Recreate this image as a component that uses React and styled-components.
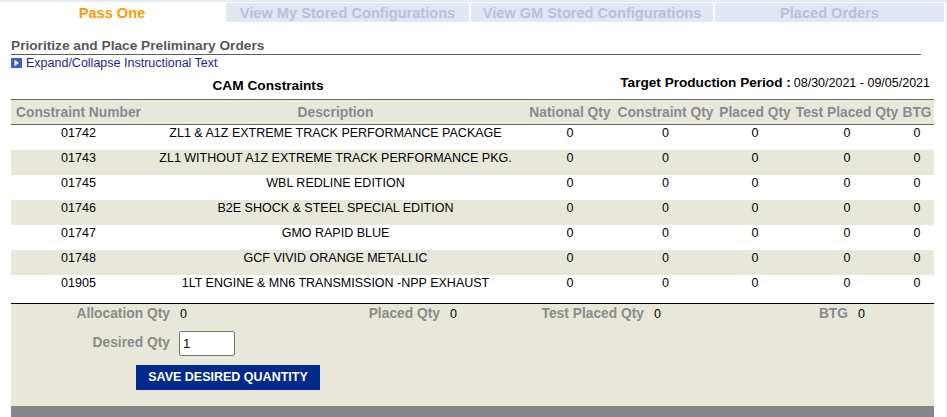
import styled, { createGlobalStyle } from 'styled-components';

const GlobalStyle = createGlobalStyle`
  html, body {
    margin: 0;
    padding: 0;
    background: #e5e9f5;
    font-family: "Liberation Sans", Arial, sans-serif;
  }
`;

const Page = styled.div`
  width: 946px;
  margin-top: 2px;
  background: #ffffff;
  min-height: 420px;
`;

const TabBar = styled.div`
  display: flex;
  gap: 2px;
  padding-top: 1px;
`;

const Tab = styled.div`
  width: ${(props) => props.$width}px;
  height: 19px;
  display: flex;
  align-items: center;
  justify-content: center;
  font-size: 14.6px;
  font-weight: 700;
  background: ${(props) => (props.$active ? '#ffffff' : '#e1e6f5')};
  color: ${(props) => (props.$active ? '#ff9900' : '#b9c0dc')};
`;

const Content = styled.div`
  padding: 0 12px 0 11px;
`;

const Heading = styled.h2`
  margin: 0 13px 0 0;
  padding: 16px 0 1px;
  line-height: 15px;
  font-size: 13.7px;
  font-weight: 700;
  color: #575757;
  border-bottom: 1px solid #5e5e54;
`;

const ToggleLink = styled.a`
  display: flex;
  align-items: center;
  gap: 4px;
  margin-top: 1px;
  line-height: 14px;
  font-size: 12.5px;
  color: #1d1d9c;
  text-decoration: none;
  cursor: pointer;
`;

const CaptionRow = styled.div`
  display: flex;
  align-items: flex-start;
  height: 29px;
`;

const CaptionTitle = styled.div`
  width: 514px;
  padding-top: 8px;
  text-align: center;
  line-height: 15px;
  font-size: 13.7px;
  font-weight: 700;
  color: #000;
`;

const PeriodInfo = styled.div`
  flex: 1;
  padding: 5px 4px 0 0;
  text-align: right;
  line-height: 15px;
  font-size: 13.6px;
  font-weight: 700;
  color: #000;

  span {
    font-size: 12.5px;
    font-weight: 400;
    margin-left: 3px;
  }
`;

const Table = styled.table`
  width: 923px;
  border-collapse: collapse;
  table-layout: fixed;
  border-top: 1px solid #666;
`;

const HeadCell = styled.th`
  height: 24px;
  padding: 0;
  background: #e8e8da;
  border-bottom: 1px solid #66665c;
  font-size: 13.8px;
  font-weight: 700;
  color: #8a8a8a;
  text-align: center;
  white-space: nowrap;
`;

const Row = styled.tr`
  background: ${(props) => (props.$shaded ? '#e8e8da' : '#ffffff')};
`;

const Cell = styled.td`
  height: 25px;
  padding: 1px 0 0;
  box-sizing: border-box;
  vertical-align: top;
  line-height: 14px;
  font-size: 12.5px;
  color: #000;
  text-align: center;
  white-space: nowrap;
`;

const SummaryPanel = styled.div`
  width: 923px;
  margin-top: 3px;
  border-top: 1px solid #000;
  background: #e8e8da;
  padding: 3px 0 16px;
`;

const SummaryGrid = styled.div`
  display: grid;
  grid-template-columns: 164px 110px 160px 40px 164px 40px 164px 81px;
  grid-template-rows: 14px 25px;
  row-gap: 10px;
  align-items: center;
`;

const Label = styled.div`
  padding-right: 5px;
  text-align: right;
  font-size: 13.8px;
  font-weight: 700;
  color: #8a8a8a;
  line-height: 14px;
`;

const Value = styled.div`
  padding-left: 5px;
  font-size: 12.5px;
  color: #000;
  line-height: 14px;
`;

const QtyInput = styled.input`
  margin-left: 4px;
  width: 56px;
  height: 25px;
  box-sizing: border-box;
  padding: 0 3px;
  border: 1px solid #767676;
  border-radius: 2px;
  font-family: "Liberation Sans", Arial, sans-serif;
  font-size: 13px;
  color: #000;
  background: #fff;
`;

const ButtonRow = styled.div`
  padding: 9px 0 0 125px;
`;

const SaveButton = styled.button`
  width: 184px;
  height: 25px;
  border: none;
  background: #00298c;
  color: #fff;
  font-family: "Liberation Sans", Arial, sans-serif;
  font-size: 12.5px;
  font-weight: 700;
  cursor: pointer;
`;

const FooterBar = styled.div`
  width: 923px;
  height: 20px;
  background: #858889;
`;

const tabs = [
  { label: 'Pass One', width: 224, active: true },
  { label: 'View My Stored Configurations', width: 243 },
  { label: 'View GM Stored Configurations', width: 242 },
  { label: 'Placed Orders', width: 229 },
];

const columns = [
  { label: 'Constraint Number', width: 135 },
  { label: 'Description', width: 379 },
  { label: 'National Qty', width: 90 },
  { label: 'Constraint Qty', width: 101 },
  { label: 'Placed Qty', width: 78 },
  { label: 'Test Placed Qty', width: 106 },
  { label: 'BTG', width: 34 },
];

const constraints = [
  { number: '01742', description: 'ZL1 & A1Z EXTREME TRACK PERFORMANCE PACKAGE' },
  { number: '01743', description: 'ZL1 WITHOUT A1Z EXTREME TRACK PERFORMANCE PKG.' },
  { number: '01745', description: 'WBL REDLINE EDITION' },
  { number: '01746', description: 'B2E SHOCK & STEEL SPECIAL EDITION' },
  { number: '01747', description: 'GMO RAPID BLUE' },
  { number: '01748', description: 'GCF VIVID ORANGE METALLIC' },
  { number: '01905', description: '1LT ENGINE & MN6 TRANSMISSION -NPP EXHAUST' },
];

function ExpandIcon() {
  return (
    <svg width="11" height="10" viewBox="0 0 11 10" aria-hidden="true">
      <rect x="0" y="0" width="11" height="10" fill="#3b5bd0" />
      <path d="M3.5 1.8 L8 5 L3.5 8.2 Z" fill="#ffffff" />
    </svg>
  );
}

export default function App() {
  return (
    <>
      <GlobalStyle />
      <Page>
        <TabBar>
          {tabs.map((tab) => (
            <Tab key={tab.label} $width={tab.width} $active={tab.active}>
              {tab.label}
            </Tab>
          ))}
        </TabBar>

        <Content>
          <Heading>Prioritize and Place Preliminary Orders</Heading>
          <ToggleLink>
            <ExpandIcon />
            Expand/Collapse Instructional Text
          </ToggleLink>

          <CaptionRow>
            <CaptionTitle>CAM Constraints</CaptionTitle>
            <PeriodInfo>
              Target Production Period :<span>08/30/2021 - 09/05/2021</span>
            </PeriodInfo>
          </CaptionRow>

          <Table>
            <colgroup>
              {columns.map((col) => (
                <col key={col.label} style={{ width: col.width }} />
              ))}
            </colgroup>
            <thead>
              <tr>
                {columns.map((col) => (
                  <HeadCell key={col.label}>{col.label}</HeadCell>
                ))}
              </tr>
            </thead>
            <tbody>
              {constraints.map((item, index) => (
                <Row key={item.number} $shaded={index % 2 === 1}>
                  <Cell>{item.number}</Cell>
                  <Cell>{item.description}</Cell>
                  <Cell>0</Cell>
                  <Cell>0</Cell>
                  <Cell>0</Cell>
                  <Cell>0</Cell>
                  <Cell>0</Cell>
                </Row>
              ))}
            </tbody>
          </Table>

          <SummaryPanel>
            <SummaryGrid>
              <Label>Allocation Qty</Label>
              <Value>0</Value>
              <Label>Placed Qty</Label>
              <Value>0</Value>
              <Label>Test Placed Qty</Label>
              <Value>0</Value>
              <Label>BTG</Label>
              <Value>0</Value>
              <Label>Desired Qty</Label>
              <div>
                <QtyInput defaultValue="1" />
              </div>
            </SummaryGrid>
            <ButtonRow>
              <SaveButton>SAVE DESIRED QUANTITY</SaveButton>
            </ButtonRow>
          </SummaryPanel>
          <FooterBar />
        </Content>
      </Page>
    </>
  );
}
